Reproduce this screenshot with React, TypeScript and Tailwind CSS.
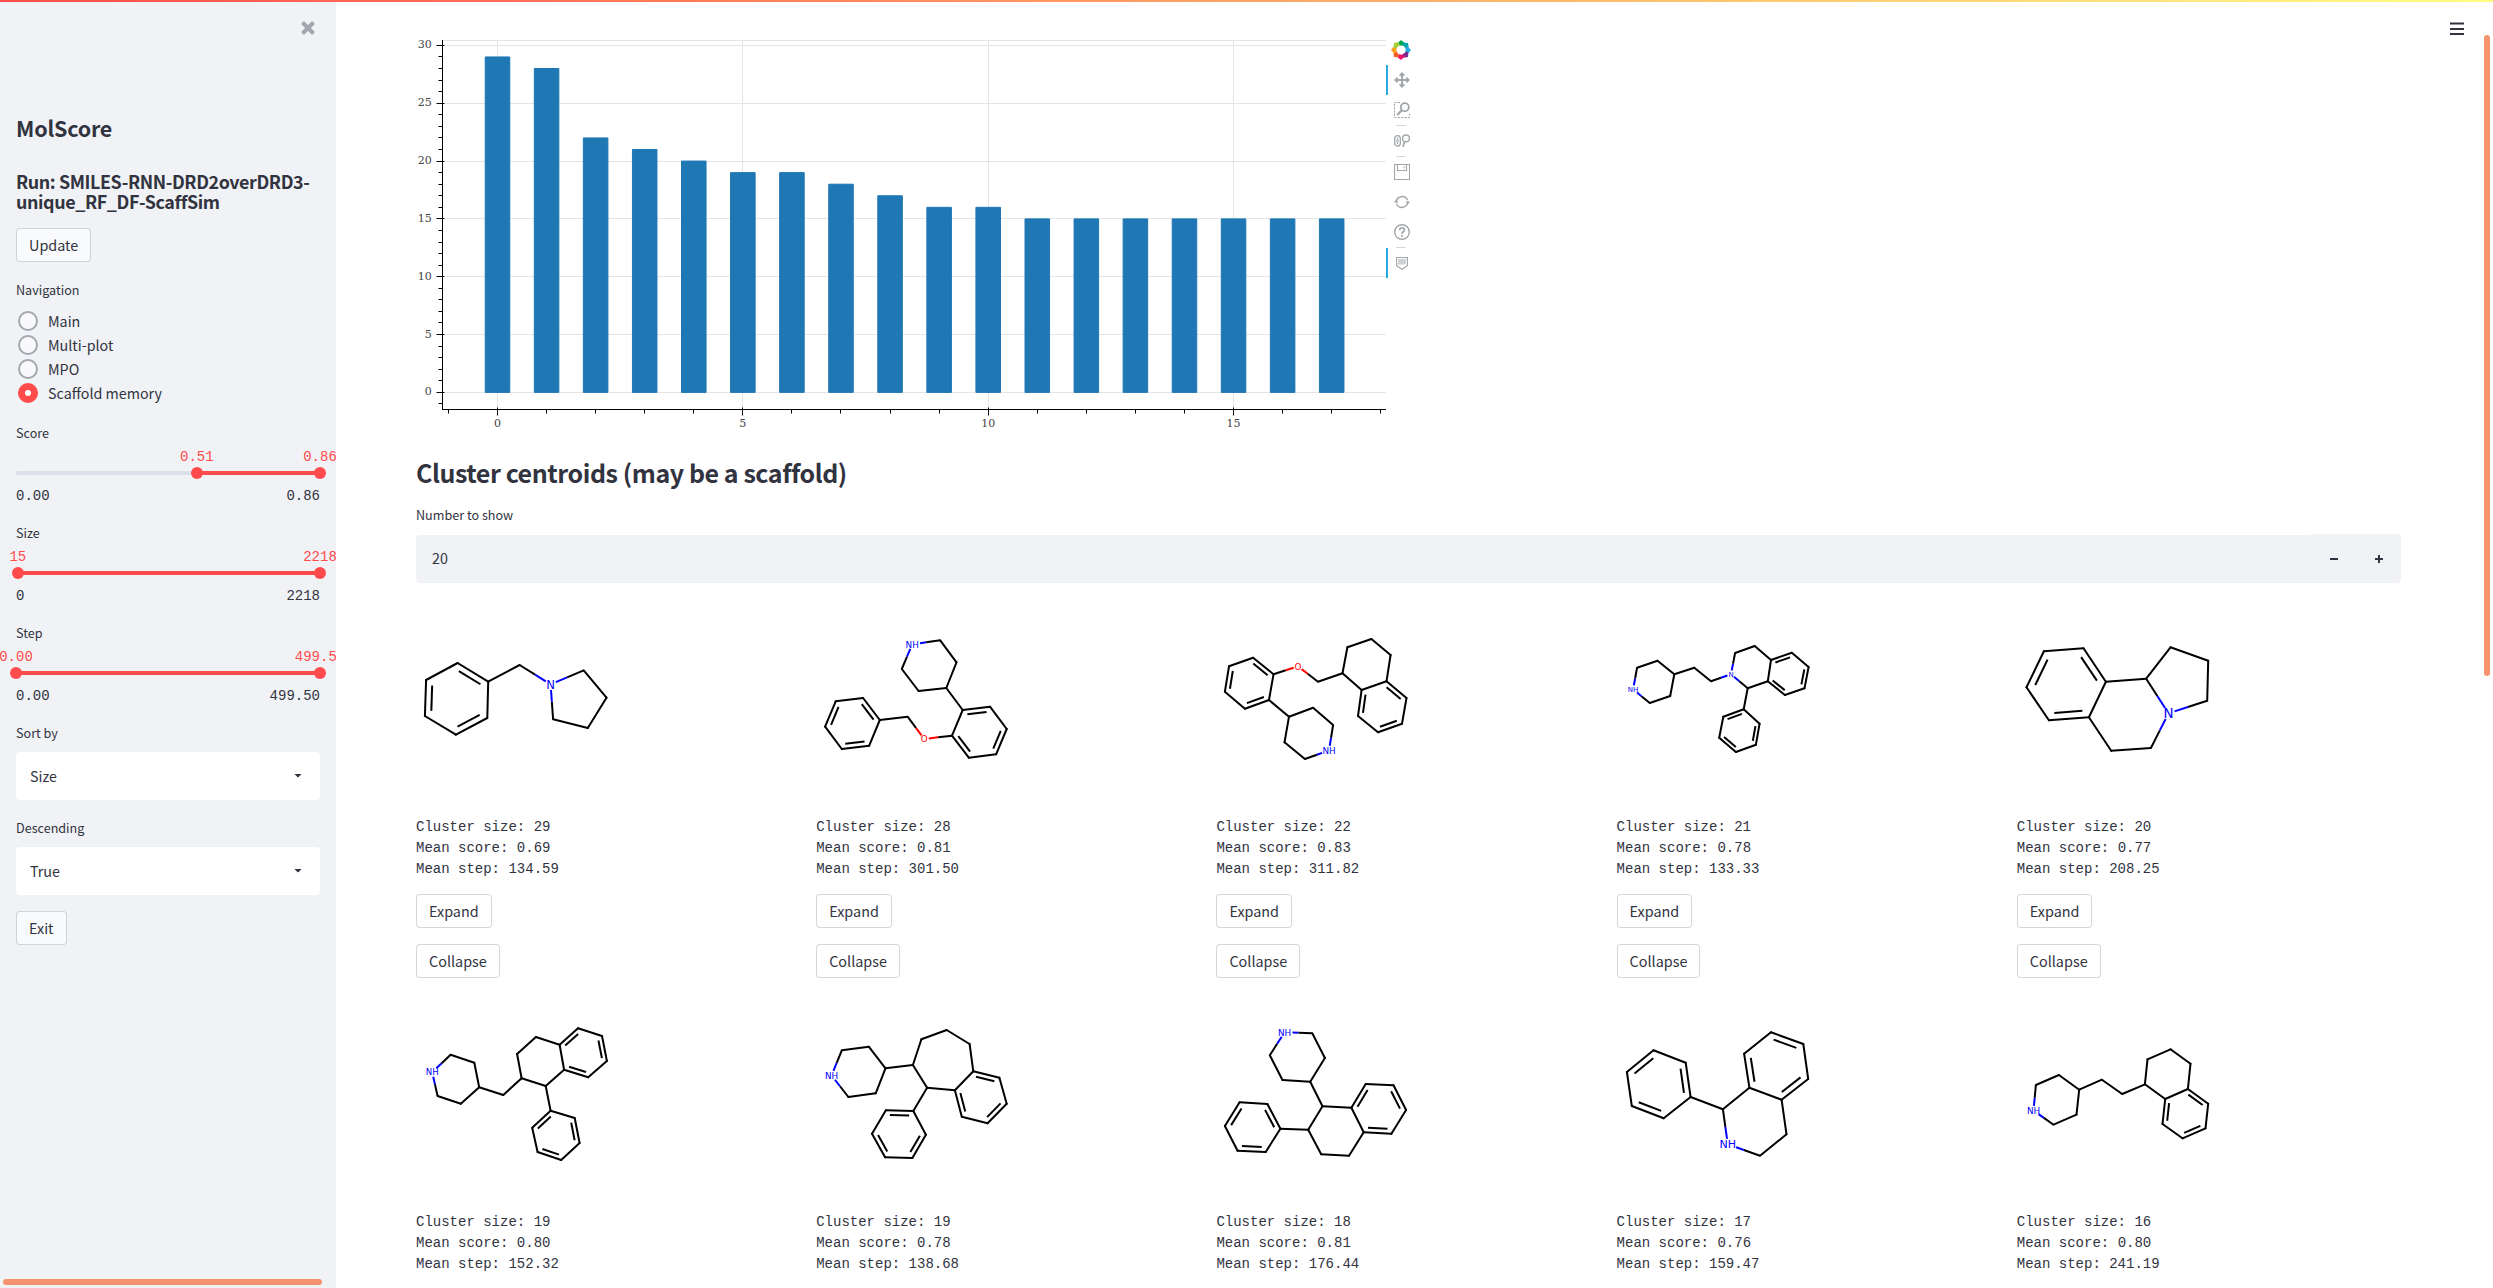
import React from "react";

type Atom = [number, number, string?];
interface Molecule {
  atoms: Atom[];
  // six-membered aromatic rings; double bonds sit on edges 0-1, 2-3 and 4-5
  aromatic: number[][];
  // runs of single bonds
  chains: number[][];
  font: number;
}
interface Cluster {
  size: number;
  score: string;
  step: string;
  mol: Molecule;
}

const CLUSTERS: Cluster[] = [
  {
    size: 29, score: "0.69", step: "134.59",
    mol: {
      font: 11.6,
      atoms: [[41.6, 64], [72.2, 82.7], [71.3, 119], [39.9, 135.7], [8.9, 117], [10.1, 81], [103.6, 66], [134.6, 85.3, "N"], [167.7, 71.3], [190.5, 98.7], [171.8, 129], [137.1, 120.3]],
      aromatic: [[0, 1, 2, 3, 4, 5]],
      chains: [[1, 6, 7, 8, 9, 10, 11, 7]],
    },
  },
  {
    size: 28, score: "0.81", step: "301.50",
    mol: {
      font: 8.8,
      atoms: [[96.2, 45.3, "NH"], [124.2, 41.3], [140.5, 63.3], [130.3, 89], [102.6, 92], [85.8, 70], [146.7, 111], [174, 107.7], [190.7, 130], [180.1, 155.3], [152.8, 158.7], [136, 136.7], [108.3, 140, "O"], [91.6, 117.7], [63.8, 121], [47.1, 99], [19.7, 102.3], [9.1, 127.7], [25.8, 150], [53.2, 146.7]],
      aromatic: [[6, 7, 8, 9, 10, 11], [14, 15, 16, 17, 18, 19]],
      chains: [[0, 1, 2, 3, 4, 5, 0], [3, 6], [11, 12, 13, 14]],
    },
  },
  {
    size: 22, score: "0.83", step: "311.82",
    mol: {
      font: 8.8,
      atoms: [[37.1, 58.7], [57.5, 75.3], [53, 101], [28.9, 109.7], [8.9, 92.7], [13, 67.3], [82, 67.3, "O"], [102, 82.7], [126.5, 74.3], [131.4, 48.3], [155.4, 40], [174.6, 56], [170.5, 82.3], [145.6, 91], [190.5, 99], [186, 124.7], [162, 133.3], [142, 117], [73, 117.7], [97.1, 108.7], [117.1, 126], [113, 151.5, "NH"], [88.9, 160], [68.5, 143.3]],
      aromatic: [[0, 1, 2, 3, 4, 5], [12, 14, 15, 16, 17, 13]],
      chains: [[1, 6, 7, 8, 9, 10, 11, 12], [13, 8], [2, 18, 19, 20, 21, 22, 23, 18]],
    },
  },
  {
    size: 21, score: "0.78", step: "133.33",
    mol: {
      font: 7,
      atoms: [[16.1, 90.3, "NH"], [20.1, 68.7], [40.5, 61.7], [57.3, 75.3], [53.2, 97], [32.8, 104], [77.3, 68.7], [94, 82.3], [114, 75.3, "N"], [118.1, 54], [137.7, 47], [154, 61], [150.8, 82.3], [130.7, 89.3], [174.8, 53.7], [191.6, 68], [187.5, 89.3], [167.9, 96], [126.7, 110.3], [142.6, 124.7], [138.9, 145.7], [118.9, 153], [102.2, 138.7], [106.3, 117.7]],
      aromatic: [[11, 14, 15, 16, 17, 12], [23, 18, 19, 20, 21, 22]],
      chains: [[0, 1, 2, 3, 4, 5, 0], [3, 6, 7, 8, 9, 10, 11], [12, 13, 8], [13, 18]],
    },
  },
  {
    size: 20, score: "0.77", step: "208.25",
    mol: {
      font: 13.4,
      atoms: [[26.9, 52.3], [66.5, 49.3], [88.9, 82.7], [71.9, 118.3], [31.9, 121.3], [9.5, 88.3], [129.2, 79.7], [153.5, 48.3], [191.2, 61.7], [190.2, 101.7], [151.5, 114.3, "N"], [133.9, 149], [94.2, 151.7]],
      aromatic: [[1, 2, 3, 4, 5, 0]],
      chains: [[2, 6, 7, 8, 9, 10, 11, 12, 3], [6, 10]],
    },
  },
  {
    size: 19, score: "0.80", step: "152.32",
    mol: {
      font: 8.6,
      atoms: [[16.2, 78.2, "NH"], [34.6, 60.7], [58.3, 68.7], [63.2, 93.3], [44.8, 109.7], [21.6, 102], [87.3, 101], [105.6, 84.3], [101.1, 60], [119.9, 43], [143.6, 50.7], [148.1, 75.7], [129.7, 92], [162, 34.3], [186, 42], [190.9, 67], [172.2, 83.3], [134.6, 116.7], [158.7, 124], [163.6, 149], [145.2, 166], [121.6, 158], [116.2, 133.7]],
      aromatic: [[10, 13, 14, 15, 16, 11], [22, 17, 18, 19, 20, 21]],
      chains: [[0, 1, 2, 3, 4, 5, 0], [3, 6, 7, 8, 9, 10], [11, 12, 7], [12, 17]],
    },
  },
  {
    size: 19, score: "0.78", step: "138.68",
    mol: {
      font: 8.8,
      atoms: [[15.6, 81.5, "NH"], [25.8, 56.3], [52.8, 52.7], [69.5, 74.3], [59.7, 99.3], [32.4, 103], [96.9, 71], [105.4, 45.3], [130.7, 36], [153.6, 50], [157.3, 77.3], [138.9, 96.3], [111.1, 93.7], [183.4, 83.7], [190.7, 109.7], [171.6, 129.3], [145.8, 122.7], [97.3, 117], [69.9, 116.3], [56, 139.7], [69.1, 163.3], [96.4, 164], [109.9, 140.7]],
      aromatic: [[10, 13, 14, 15, 16, 11], [17, 18, 19, 20, 21, 22]],
      chains: [[0, 1, 2, 3, 4, 5, 0], [3, 6, 7, 8, 9, 10], [11, 12, 6], [12, 17]],
    },
  },
  {
    size: 18, score: "0.81", step: "176.44",
    mol: {
      font: 8.8,
      atoms: [[68.5, 38.3, "NH"], [96.3, 39.3], [108.9, 64], [94.2, 87.7], [66.5, 86], [53.8, 61.3], [106.5, 112.3], [135.4, 113.7], [147.7, 138.3], [133, 161.7], [105.2, 160.3], [92.2, 135.7], [149.7, 90], [177.5, 91.3], [190.1, 116], [175.4, 139.7], [64.4, 134.7], [51.4, 110], [23.6, 108.3], [8.9, 132], [21.6, 156.7], [49.7, 158]],
      aromatic: [[7, 12, 13, 14, 15, 8], [16, 17, 18, 19, 20, 21]],
      chains: [[0, 1, 2, 3, 4, 5, 0], [3, 6, 7], [8, 9, 10, 11, 6], [11, 16]],
    },
  },
  {
    size: 17, score: "0.76", step: "159.47",
    mol: {
      font: 11,
      atoms: [[36.5, 56.3], [68.7, 68.7], [73.6, 103], [46.7, 124.3], [14.8, 112], [9.9, 78], [105.9, 115.3], [132.4, 93.7], [164.6, 105.7], [169.5, 140.3], [143, 161.7], [110.8, 150.3, "NH"], [127.1, 59.7], [154, 38.3], [186.3, 50], [191.2, 85]],
      aromatic: [[1, 2, 3, 4, 5, 0], [12, 7, 8, 15, 14, 13]],
      chains: [[2, 6, 7], [8, 9, 10, 11, 6]],
    },
  },
  {
    size: 16, score: "0.80", step: "241.19",
    mol: {
      font: 8.8,
      atoms: [[16.5, 116.5, "NH"], [18.9, 91], [41.9, 81], [62.2, 95.7], [59.5, 120.7], [36.5, 130.7], [84.9, 85.7], [105.2, 100], [127.9, 90.3], [130.5, 65.3], [153.5, 55.3], [173.5, 69.7], [170.9, 95], [148.2, 105], [191.2, 109.7], [188.5, 134.3], [165.5, 144.3], [145.5, 130]],
      aromatic: [[12, 14, 15, 16, 17, 13]],
      chains: [[0, 1, 2, 3, 4, 5, 0], [3, 6, 7, 8, 9, 10, 11, 12], [13, 8]],
    },
  },
];

const atomColor = (label?: string) => (!label ? "#000" : label === "O" ? "#f00" : "#00f");

// Where a bond leaving a labelled atom becomes visible, outside the label's ellipse.
function trim(from: Atom, to: Atom, font: number): [number, number] {
  if (!from[2]) return [from[0], from[1]];
  const dx = to[0] - from[0];
  const dy = to[1] - from[1];
  const rx = font * 0.4 * from[2].length + 1;
  const ry = font * 0.37 + 1.4;
  const t = 1 / Math.hypot(dx / rx, dy / ry);
  return [from[0] + dx * t, from[1] + dy * t];
}

function MoleculeDrawing({ mol }: { mol: Molecule }) {
  const { atoms, font } = mol;
  const lines: React.ReactNode[] = [];
  const bond = (i: number, j: number) => {
    const a = atoms[i];
    const b = atoms[j];
    const p = trim(a, b, font);
    const q = trim(b, a, font);
    const key = `${lines.length}`;
    if (!a[2] && !b[2]) {
      lines.push(<path key={key} d={`M${p}L${q}`} stroke="#000" strokeLinecap="round" />);
      return;
    }
    const m = [(a[0] + b[0]) / 2, (a[1] + b[1]) / 2];
    lines.push(<path key={key + "a"} d={`M${p}L${m}`} stroke={atomColor(a[2])} />);
    lines.push(<path key={key + "b"} d={`M${m}L${q}`} stroke={atomColor(b[2])} />);
  };
  mol.chains.forEach((c) => c.slice(1).forEach((j, k) => bond(c[k], j)));
  mol.aromatic.forEach((ring, r) => {
    const cx = ring.reduce((s, i) => s + atoms[i][0], 0) / 6;
    const cy = ring.reduce((s, i) => s + atoms[i][1], 0) / 6;
    ring.forEach((i, k) => {
      const j = ring[(k + 1) % 6];
      bond(i, j);
      if (k % 2 === 0) {
        // moving 20% towards the centre gives both the inset and the shortening
        const f = 0.2;
        const s = 0.06;
        const ax = atoms[i][0] + (cx - atoms[i][0]) * f;
        const ay = atoms[i][1] + (cy - atoms[i][1]) * f;
        const bx = atoms[j][0] + (cx - atoms[j][0]) * f;
        const by = atoms[j][1] + (cy - atoms[j][1]) * f;
        lines.push(
          <path
            key={`in${r}-${k}`}
            stroke="#000"
            d={`M${ax + (bx - ax) * s},${ay + (by - ay) * s}L${bx + (ax - bx) * s},${by + (ay - by) * s}`}
          />
        );
      }
    });
  });
  return (
    <svg width="200" height="200" viewBox="0 0 200 200" fill="none" strokeWidth="2" className="block">
      <g>{lines}</g>
      {atoms.map((a, i) =>
        a[2] ? (
          <text
            key={i}
            x={a[0]}
            y={a[1] + font * 0.365}
            fontSize={font}
            textAnchor="middle"
            fill={atomColor(a[2])}
            stroke="none"
            className="font-['DejaVu_Sans',sans-serif]"
          >
            {a[2]}
          </text>
        ) : null
      )}
    </svg>
  );
}

function BarChart() {
  const values = CLUSTERS.map((c) => c.size).concat([16, 15, 15, 15, 15, 15, 15, 15]);
  const x = (v: number) => 81.5 + v * 49.07;
  const y = (v: number) => 367.4 - v * 11.567;
  const snap = (v: number) => Math.floor(v) + 0.5;
  const range = (a: number, b: number) => Array.from({ length: b - a + 1 }, (_, i) => a + i);
  return (
    <svg width="970" height="415" viewBox="0 0 970 415" className="block shrink-0">
      <g stroke="#e5e5e5" fill="none">
        <rect x="26.5" y="15.5" width="944" height="369" />
        {[0, 5, 10, 15].map((v) => <path key={v} d={`M${snap(x(v))} 15V384`} />)}
        {[0, 5, 10, 15, 20, 25, 30].map((v) => <path key={v} d={`M27 ${snap(y(v))}H970`} />)}
      </g>
      <g fill="#1f77b4" stroke="#1f77b4" strokeLinejoin="bevel">
        {values.map((v, i) => (
          <rect key={i} x={x(i) - 12.27} y={y(v)} width={24.54} height={y(0) - y(v)} />
        ))}
      </g>
      <g stroke="#000">
        <path d="M26.5 15V385M26 384.5H970" />
        {range(-1, 30).map((v) => (
          <path key={v} d={`M${v % 5 ? 22.5 : 20.5} ${snap(y(v))}H${v % 5 ? 26.5 : 28.5}`} />
        ))}
        {range(-1, 18).map((v) => (
          <path key={v} d={`M${snap(x(v))} ${v % 5 ? 384.5 : 382.5}V${v % 5 ? 388.5 : 390.5}`} />
        ))}
      </g>
      <g fill="#444" fontSize="11" className="font-['DejaVu_Serif',serif]">
        {[0, 5, 10, 15, 20, 25, 30].map((v) => (
          <text key={v} x="15.8" y={y(v) + 3} textAnchor="end">{v}</text>
        ))}
        {[0, 5, 10, 15].map((v) => (
          <text key={v} x={x(v)} y="402" textAnchor="middle">{v}</text>
        ))}
      </g>
    </svg>
  );
}

const LOGO_COLORS = ["#00a54f", "#00a3a6", "#27aae1", "#7b2c8e", "#ee0f6d", "#f15a29", "#f9a01b", "#a6ce39"];

function ToolButton({ active, children }: { active?: boolean; children: React.ReactNode }) {
  return (
    <div className={`flex h-[30px] w-[30px] items-center border-l-2 pl-1.5 ${active ? "border-[#26aae1]" : "border-transparent"}`}>
      <svg width="16" height="16" viewBox="0 0 16 16" fill="none" stroke="#a1a6a9" strokeWidth="1.4">
        {children}
      </svg>
    </div>
  );
}

const ToolDivider = () => <div className="ml-2.5 h-px w-2.5 bg-gray-300" />;

function Toolbar() {
  return (
    <div className="mt-2.5 flex w-[30px] flex-col">
      <div className="flex h-[30px] items-center pl-[5px]">
        <svg width="20" height="20" viewBox="-10 -10 20 20">
          {LOGO_COLORS.map((c, i) => (
            <polygon key={c} fill={c} transform={`rotate(${i * 45})`} points="-3.8,-6.6 0,-10 3.6,-7.2 2.6,-4.2 -2.2,-4.8" />
          ))}
        </svg>
      </div>
      <ToolButton active>
        <path d="M8 1.5V14.5M1.5 8H14.5" strokeWidth="1.9" />
        <path d="M5.6 3.6L8 1.2L10.4 3.6M5.6 12.4L8 14.8L10.4 12.4M3.6 5.6L1.2 8L3.6 10.4M12.4 5.6L14.8 8L12.4 10.4" strokeWidth="1.6" />
      </ToolButton>
      <ToolButton>
        <path d="M6 .5H.5V15.5H15.5V10.5" strokeWidth="1" strokeDasharray="2.2 1.2" />
        <circle cx="10.8" cy="5.2" r="4" strokeWidth="1.8" />
        <path d="M8 8L3.2 13" strokeWidth="2.2" />
      </ToolButton>
      <ToolDivider />
      <ToolButton>
        <rect x=".7" y="2.6" width="5.6" height="10.6" rx="2.8" strokeWidth="1.3" />
        <path d="M3.5 4.5V6.8M3.5 9V11.4M2.2 7.9H4.8" strokeWidth="1.1" />
        <circle cx="12" cy="5.4" r="3.4" strokeWidth="1.4" />
        <path d="M10.6 8.4L9 13.8" strokeWidth="1.8" />
      </ToolButton>
      <ToolDivider />
      <ToolButton>
        <path d="M.5 .5H15.5V15.5H.5Z" strokeWidth="1.1" />
        <path d="M3.5 .5V6.5H12.5V.5M10 2.5V4.5" strokeWidth="1.1" />
      </ToolButton>
      <ToolButton>
        <path d="M2.1 8.4A6 6 0 0 1 13.6 6.2M13.9 7.6A6 6 0 0 1 2.4 9.8" strokeWidth="1.4" />
        <path d="M0 8.6L2.3 5.6L4.6 8.6ZM11.4 7.4L13.7 10.4L16 7.4Z" fill="#a1a6a9" stroke="none" />
      </ToolButton>
      <ToolButton>
        <circle cx="8" cy="8" r="7.3" />
        <path d="M5.6 6.2C5.7 3 10.4 3 10.4 5.9C10.4 7.8 8 7.7 8 9.8M8 11V12.8" strokeWidth="1.7" />
      </ToolButton>
      <ToolDivider />
      <ToolButton active>
        <path d="M2.6 2.5H13.4V10.6L8 14.3L2.6 10.6Z" strokeWidth="1.1" />
        <path d="M4 4H12V9.6H4Z" fill="#cfd2d4" stroke="none" />
      </ToolButton>
    </div>
  );
}

function Slider({ label, low, high, min, max, start }: { label: string; low: string; high: string; min: string; max: string; start: number }) {
  return (
    <div className="mb-2.5 h-[90px]">
      <Label>{label}</Label>
      <div className="h-[26px]" />
      <div className="relative mt-[2px] h-1 rounded-full bg-[#dadfe9]">
        <div className="absolute inset-y-0 right-0 bg-[#ff4b4b]" style={{ left: `${start}%` }} />
        {[[start, low], [100, high]].map(([pos, text]) => (
          <div key={text} className="absolute top-1/2 h-3 w-3 -translate-x-1/2 -translate-y-1/2 rounded-full bg-[#ff4b4b]" style={{ left: `${pos}%` }}>
            <span className="absolute bottom-[14px] left-1/2 -translate-x-1/2 font-['Liberation_Mono',monospace] text-sm leading-4 text-[#ff4b4b]">
              {text}
            </span>
          </div>
        ))}
      </div>
      <div className="flex justify-between pt-[11px] font-['Liberation_Mono',monospace] text-sm leading-5">
        <span>{min}</span>
        <span>{max}</span>
      </div>
    </div>
  );
}

function Label({ children }: { children: React.ReactNode }) {
  return <div className="h-5 text-[12.6px] leading-5">{children}</div>;
}

function Button({ children }: { children: React.ReactNode }) {
  return (
    <button className="flex h-[34px] items-center rounded-[4px] border border-[#31333f]/20 bg-white/60 px-3 text-[14.4px] leading-none">
      {children}
    </button>
  );
}

function Select({ value }: { value: string }) {
  return (
    <div className="flex h-12 items-center justify-between rounded-[4px] bg-white pl-3.5 pr-[18px] text-[14.3px]">
      {value}
      <svg width="8" height="4" viewBox="0 0 8 4"><path d="M.5 0H7.5L4.6 3Q4 3.6 3.4 3Z" fill="#31333f" /></svg>
    </div>
  );
}

function Sidebar() {
  return (
    <aside className="relative flex w-[336px] shrink-0 flex-col overflow-hidden bg-[#f0f2f6] px-4">
      <div className="flex h-14 items-center justify-end pr-[5px]">
        <svg width="14" height="14" viewBox="0 0 14 14" stroke="#a3a6ae" strokeWidth="4"><path d="M1.5 1.5L12.5 12.5M12.5 1.5L1.5 12.5" /></svg>
      </div>
      <h1 className="mt-[57px] h-[30px] text-[21.5px] font-bold leading-[30px] tracking-[-0.2px]">MolScore</h1>
      <h2 className="mt-7 whitespace-nowrap text-[17.9px] font-bold leading-5 tracking-[-0.4px]">
        Run: SMILES-RNN-DRD2overDRD3-<br />unique_RF_DF-ScaffSim
      </h2>
      <div className="mt-[17px] flex"><Button>Update</Button></div>
      <div className="mt-[18px]"><Label>Navigation</Label></div>
      <div className="mt-[9px] flex flex-col">
        {["Main", "Multi-plot", "MPO", "Scaffold memory"].map((item) => {
          const on = item === "Scaffold memory";
          return (
            <div key={item} className="flex h-6 items-center pl-0.5 text-[14.3px]">
              <span className={`mr-2.5 h-5 w-5 rounded-full ${on ? "border-[7px] border-[#ff4b4b] bg-white" : "border-2 border-[#a3a6ae] bg-[#f9f9fb]"}`} />
              {item}
            </div>
          );
        })}
      </div>
      <div className="mt-[18px]">
        <Slider label="Score" low="0.51" high="0.86" min="0.00" max="0.86" start={59.5} />
        <Slider label="Size" low="15" high="2218" min="0" max="2218" start={0.6} />
        <Slider label="Step" low="0.00" high="499.50" min="0.00" max="499.50" start={0} />
      </div>
      <Label>Sort by</Label>
      <div className="mt-[9px]"><Select value="Size" /></div>
      <div className="mt-[18px]"><Label>Descending</Label></div>
      <div className="mt-[9px]"><Select value="True" /></div>
      <div className="mt-4 flex"><Button>Exit</Button></div>
      <div className="absolute bottom-[3px] left-[3px] h-1.5 w-[319px] rounded-full bg-[#f5936c]" />
    </aside>
  );
}

function ClusterCard({ cluster }: { cluster: Cluster }) {
  return (
    <div className="h-[395px]">
      <MoleculeDrawing mol={cluster.mol} />
      <div className="mt-[18px] whitespace-pre font-['Liberation_Mono',monospace] text-sm leading-[21px]">
        <div>Cluster size: {cluster.size}</div>
        <div>Mean score: {cluster.score}</div>
        <div>Mean step: {cluster.step}</div>
      </div>
      <div className="mt-3.5 flex flex-col items-start gap-4">
        <Button>Expand</Button>
        <Button>Collapse</Button>
      </div>
    </div>
  );
}

export default function App() {
  return (
    <div className="relative flex h-[1288px] w-[2493px] overflow-hidden bg-white font-['Noto_Sans_CJK_SC',sans-serif] text-[#31333f]">
      <Sidebar />
      <main className="min-w-0 flex-1 pl-20 pr-[92px] pt-[25px]">
        <div className="flex h-[432px]">
          <BarChart />
          <Toolbar />
        </div>
        <h2 className="h-[30px] text-[25px] font-bold leading-[30px] tracking-[-0.44px]">Cluster centroids (may be a scaffold)</h2>
        <div className="mt-[18px]"><Label>Number to show</Label></div>
        <div className="mt-[9px] flex h-[49px] items-end">
          <div className="flex h-12 flex-1 items-center rounded-l-[4px] bg-[#f0f2f6] pb-0.5 pl-4 text-[14.3px]">20</div>
          <div className="flex h-[49px] w-[90px] items-center rounded-r-[4px] bg-[#f0f2f6]">
            <div className="w-[45px] pl-[19px]"><svg className="block" width="8" height="8"><path d="M0 4H8" stroke="#31333f" strokeWidth="2" /></svg></div>
            <div className="w-[45px] pl-[19px]"><svg className="block" width="8" height="8"><path d="M0 4H8M4 0V8" stroke="#31333f" strokeWidth="2" /></svg></div>
          </div>
        </div>
        <div className="mt-4 grid grid-cols-5 gap-x-4">
          {CLUSTERS.map((c, i) => <ClusterCard key={i} cluster={c} />)}
        </div>
      </main>
      <div className="absolute inset-x-0 top-0 h-0.5 bg-[linear-gradient(90deg,#ff4b4b,#fffd80)]" />
      <svg className="absolute right-[29px] top-[21px]" width="14" height="16"><path d="M0 2.5H14M0 8H14M0 13H14" stroke="#31333f" strokeWidth="1.8" /></svg>
      <div className="absolute right-[3px] top-[35px] h-[641px] w-1.5 rounded-full bg-[#f5936c]" />
    </div>
  );
}
